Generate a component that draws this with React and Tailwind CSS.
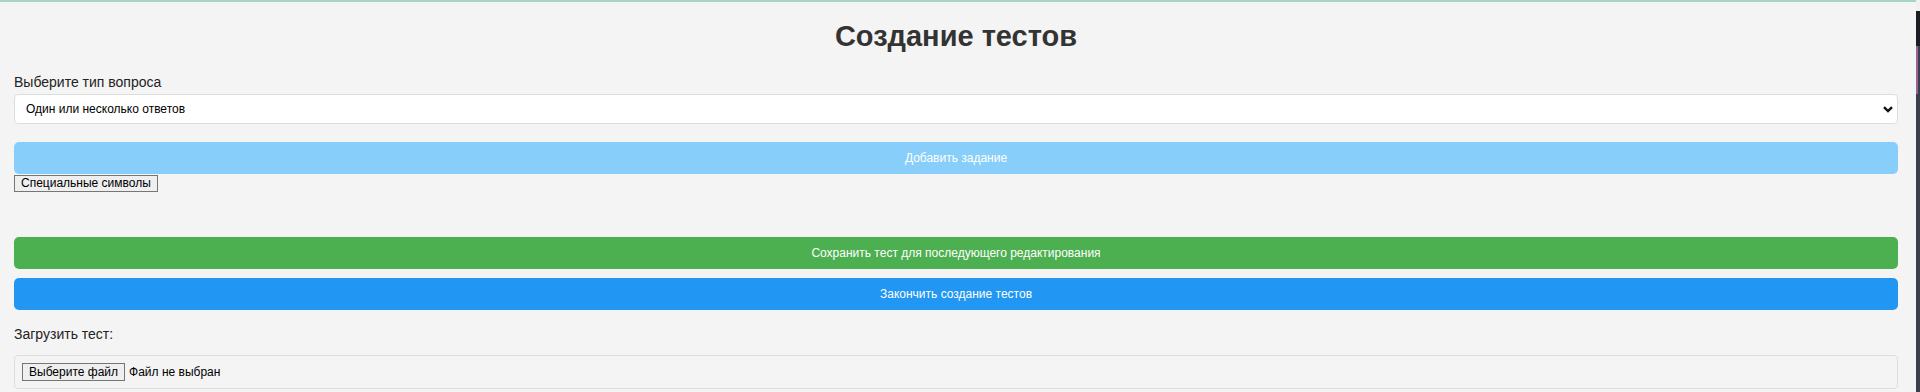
import React, { useState } from "react";

const font = { fontFamily: '"Liberation Sans", Arial, sans-serif' };

const App = () => {
  const [questionType, setQuestionType] = useState("multi");

  return (
    <div className="flex min-h-screen bg-[#f4f4f4] text-[#222]" style={font}>
      <main className="flex-1 border-t-2 border-[#a6d5c6] pl-[14px] pr-[18px]">
        <h1 className="mt-[18px] text-center text-[29px] font-bold leading-[32px] text-[#333]">
          Создание тестов
        </h1>

        <label className="mt-[22px] block text-[14px] leading-[16px]">
          Выберите тип вопроса
        </label>
        <div className="relative mt-[4px]">
          <select
            value={questionType}
            onChange={(e) => setQuestionType(e.target.value)}
            className="block h-[30px] w-full appearance-none rounded-[4px] border border-[#ddd] bg-white pl-[11px] text-[12px] text-black outline-none"
          >
            <option value="multi">Один или несколько ответов</option>
            <option value="text">Текстовый ответ</option>
          </select>
          <svg
            className="pointer-events-none absolute right-[5px] top-[12px]"
            width="10"
            height="7"
            viewBox="0 0 10 7"
          >
            <path d="M1 1.2 L5 5 L9 1.2" fill="none" stroke="#111" strokeWidth="2.4" />
          </svg>
        </div>

        <button className="mt-[18px] block h-[32px] w-full rounded-[5px] bg-[#87cefa] text-[12px] text-white">
          Добавить задание
        </button>
        <button className="mt-[1px] block h-[17px] border border-[#767676] bg-[#efefef] px-[6px] text-[12px] leading-[15px] text-black">
          Специальные символы
        </button>

        <button className="mt-[45px] block h-[32px] w-full rounded-[5px] bg-[#4caf50] text-[12px] text-white">
          Сохранить тест для последующего редактирования
        </button>
        <button className="mt-[9px] block h-[32px] w-full rounded-[5px] bg-[#2196f3] text-[12px] text-white">
          Закончить создание тестов
        </button>

        <p className="mt-[16px] text-[14px] leading-[16px]">Загрузить тест:</p>
        <div className="mt-[13px] flex h-[34px] items-center gap-[4px] rounded-[4px] border border-[#ddd] px-[7px] text-[12px] text-black">
          <button className="h-[18px] border border-[#767676] bg-[#efefef] px-[6px] leading-[16px]">
            Выберите файл
          </button>
          <span>Файл не выбран</span>
        </div>
      </main>

      <div className="flex w-[4px] flex-col">
        <div className="h-[11px] bg-[#f0f0f0]" />
        <div className="h-[35px] bg-[#1c1c22]" />
        <div className="flex h-[48px]">
          <div className="w-[2px] bg-[#9c5f96]" />
          <div className="flex-1 bg-[#3b3f4c]" />
        </div>
        <div className="flex-1 bg-[#3b3f4c]" />
      </div>
    </div>
  );
};

export default App;
